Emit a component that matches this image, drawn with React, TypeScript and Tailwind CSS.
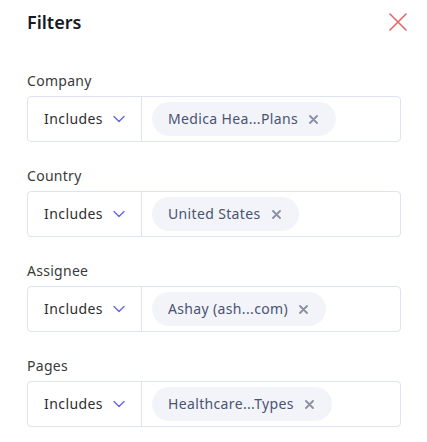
import React from 'react';

interface Filter {
  label: string;
  value: string;
}

const filters: Filter[] = [
  { label: 'Company', value: 'Medica Hea...Plans' },
  { label: 'Country', value: 'United States' },
  { label: 'Assignee', value: 'Ashay (ash...com)' },
  { label: 'Pages', value: 'Healthcare...Types' },
];

const Chevron = () => (
  <svg width="12" height="8" viewBox="0 0 12 8" fill="none" className="text-[#6366f1]">
    <path d="M1 1.5l5 5 5-5" stroke="currentColor" strokeWidth="1.4" strokeLinecap="round" strokeLinejoin="round" />
  </svg>
);

const SmallX = () => (
  <svg width="9" height="9" viewBox="0 0 9 9" fill="none" className="text-[#8a8fa3]">
    <path d="M1 1l7 7M8 1L1 8" stroke="currentColor" strokeWidth="1.8" strokeLinecap="round" />
  </svg>
);

const FilterRow: React.FC<{ filter: Filter }> = ({ filter }) => (
  <div className="flex flex-col">
    <div className="text-sm leading-5 tracking-[0.02em] text-[#3a3a3a] mb-[5px]">{filter.label}</div>
    <div className="flex h-[46px] rounded-[4px] border border-[#dfe2f1] bg-white">
      <div className="w-[114px] flex items-center pl-4 gap-[10px] border-r border-[#dfe2f1]">
        <span className="text-sm tracking-[0.03em] text-[#2e2e2e]">Includes</span>
        <Chevron />
      </div>
      <div className="flex items-center pl-[10px]">
        <div className="h-[34px] rounded-full bg-[#f3f4fa] flex items-center pl-4 pr-[18px] gap-[11px]">
          <span className="text-sm tracking-[0.025em] text-[#4a5370]">{filter.value}</span>
          <SmallX />
        </div>
      </div>
    </div>
  </div>
);

export default function App() {
  return (
    <div
      className="w-[427px] h-[442px] bg-white pl-[27px] pr-[26px] pt-2"
      style={{ fontFamily: '"Noto Sans", "Open Sans", sans-serif' }}
    >
      <div className="flex items-center justify-between h-7">
        <h2 className="text-lg font-semibold text-[#161a26]">Filters</h2>
        <svg width="18" height="18" viewBox="0 0 18 18" fill="none" className="text-[#e06767] -mr-[6px]">
          <path d="M1 1l16 16M17 1L1 17" stroke="currentColor" strokeWidth="1.6" strokeLinecap="round" />
        </svg>
      </div>
      <div className="mt-[35px] flex flex-col gap-6">
        {filters.map(f => (
          <FilterRow key={f.label} filter={f} />
        ))}
      </div>
    </div>
  );
}
